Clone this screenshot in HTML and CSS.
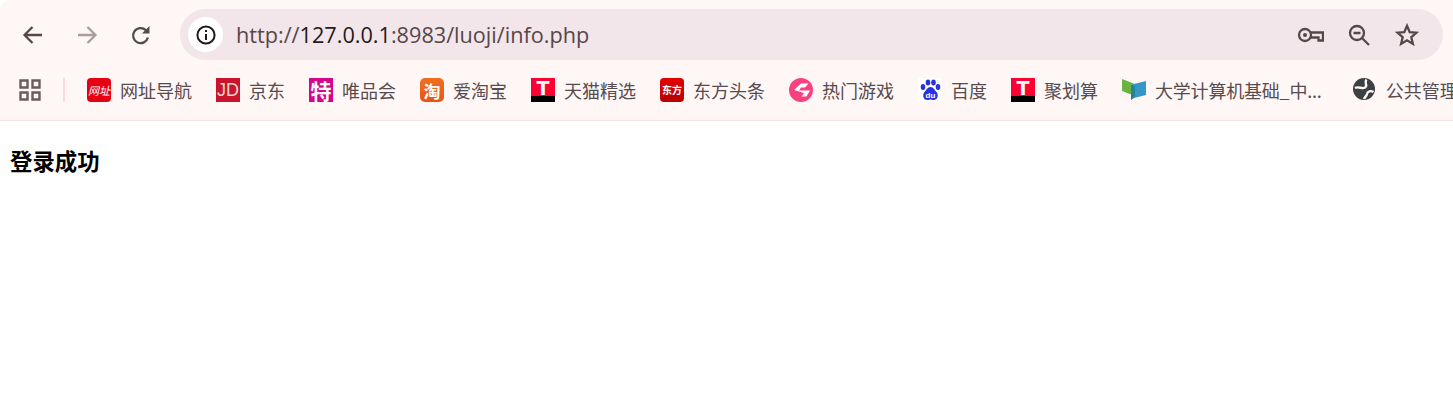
FILE: index.html
```
<!DOCTYPE html>
<html lang="zh-CN">
<head>
<meta charset="utf-8">
<title>登录成功</title>
<link rel="stylesheet" href="styles.css">
</head>
<body>
<header class="chrome">
  <div class="toolbar">
    <div class="nav">
      <button class="nav-btn"><svg width="24" height="24" viewBox="0 0 24 24"><path d="M21 12H4M11.500 4l-8 8 8 8" class="stroke"/></svg></button>
      <button class="nav-btn is-disabled"><svg width="24" height="24" viewBox="0 0 24 24"><path d="M3 12h17M12.500 4l8 8-8 8" class="stroke"/></svg></button>
      <button class="nav-btn"><svg width="24" height="24" viewBox="0 0 24 24"><path d="M18.900 14.500A7.500 7.500 0 1 1 16.800 7.200" class="stroke"/><path d="M20.500 3v7.500H13z" fill="#574749"/></svg></button>
    </div>
    <div class="omnibox">
      <span class="site-info"><svg width="22" height="22" viewBox="0 0 22 22"><circle cx="11" cy="11" r="8.600" fill="none" stroke="#1f1a1b" stroke-width="2"/><path d="M11 10v6M11 6v2" stroke="#1f1a1b" stroke-width="2" fill="none"/></svg></span>
      <span class="url">http://<b class="host">127.0.0.1</b>:8983/luoji/info.php</span>
      <span class="actions">
        <svg class="key" width="29" height="24" viewBox="0 0 29 24"><circle cx="10" cy="12" r="6" class="stroke"/><circle cx="10" cy="12" r="2" fill="#574749"/><path d="M16 9.500H28V17.500H23.500V14.500H16" class="stroke"/></svg>
        <svg width="24" height="24" viewBox="0 0 24 24"><circle cx="10" cy="10" r="7" class="stroke"/><path d="M15 15l7 7M6.500 10h7" class="stroke"/></svg>
        <svg width="24" height="24" viewBox="0 0 24 24"><path d="M12 2.800l2.700 6.300 6.800.6-5.200 4.500 1.600 6.700-5.900-3.600-5.900 3.600 1.600-6.700-5.200-4.500 6.800-.6z" class="stroke"/></svg>
      </span>
    </div>
  </div>
  <nav class="bookmarks">
    <svg class="apps" width="22" height="22" viewBox="0 0 22 22"><path d="M1.500 1.500h7v7h-7zM13.500 1.500h7v7h-7zM1.500 13.500h7v7h-7zM13.500 13.500h7v7h-7z" fill="none" stroke="#6b5c5e" stroke-width="2.400"/></svg>
    <span class="sep"></span>
    <a class="bm"><span class="fav fav-wz">网址</span>网址导航</a>
    <a class="bm"><span class="fav fav-jd">JD</span>京东</a>
    <a class="bm"><span class="fav fav-te">特</span>唯品会</a>
    <a class="bm"><span class="fav fav-tao">淘</span>爱淘宝</a>
    <a class="bm"><span class="fav fav-t">T</span>天猫精选</a>
    <a class="bm"><span class="fav fav-df">东方</span>东方头条</a>
    <a class="bm"><svg class="fav" viewBox="0 0 24 24"><circle cx="12" cy="12" r="12" fill="#f8417f"/><path d="M5 12l7-6.500h7.500l-3.500 4h-4l-2 3h11l-3.500 6h-5l2.500-3.500z" fill="#fff"/></svg>热门游戏</a>
    <a class="bm"><svg class="fav" viewBox="0 0 24 24"><rect width="24" height="24" fill="#fff"/><g fill="#2932e1"><ellipse cx="5" cy="9" rx="2.300" ry="3"/><ellipse cx="10" cy="4.500" rx="2.300" ry="3"/><ellipse cx="15.500" cy="4.500" rx="2.300" ry="3"/><ellipse cx="20" cy="9" rx="2.300" ry="3"/><path d="M12.500 9c3 0 4 3 6 5s2 8-3 8c-2 0-2-.8-3-.8s-1 .8-3 .8c-5 0-5-6-3-8s3-5 6-5z"/></g><text x="12.500" y="20" class="du">du</text></svg>百度</a>
    <a class="bm"><span class="fav fav-t">T</span>聚划算</a>
    <a class="bm bm-long"><svg class="fav" viewBox="0 0 24 24"><path d="M0 1l13 5v12L0 13z" fill="#69b340"/><path d="M12 6l12-3v14l-12 3-3 2V7z" fill="#3497c9"/><path d="M9 7l4 1v10l-4 4z" fill="#2a7f9b"/></svg>大学计算机基础_中...</a>
    <a class="bm"><svg class="fav" viewBox="0 0 24 24"><circle cx="11" cy="11" r="11" fill="#3c4043"/><path d="M13.500 1.500C10.500 5 15.500 7 12 9.500 9 11.500 6 8 2 10M20.500 14C18 12.500 14.500 13 14 16 13.500 18.500 11.500 19 11 21" fill="none" stroke="#fff6f6" stroke-width="2.400"/></svg>公共管理</a>
  </nav>
</header>
<main class="page">
  <h3 class="msg">登录成功</h3>
</main>
</body>
</html>
```
FILE: styles.css
```
* { box-sizing: border-box; }
html, body { margin: 0; padding: 0; height: 100%; overflow: hidden; background: #fff; }
body { font-family: "Noto Sans CJK SC", "Noto Sans", sans-serif; }

.chrome {
  background: #fff6f6;
  border-bottom: 1px solid #fbdfe2;
  border-top-left-radius: 10px;
  height: 121px;
}
.toolbar {
  display: flex;
  align-items: center;
  height: 70px;
  padding: 9px 10px 10px 6px;
}
.nav { display: flex; gap: 22px; width: 174px; padding-left: 11px; }
.nav-btn {
  width: 32px; height: 32px; padding: 4px;
  border: 0; background: none;
  display: flex; align-items: center; justify-content: center;
}
.stroke { fill: none; stroke: #574749; stroke-width: 2.300; }
.is-disabled svg { opacity: .5; }

.omnibox {
  flex: 1;
  height: 51px;
  background: #f2e6ea;
  border-radius: 26px;
  display: flex;
  align-items: center;
  padding: 0 24px 0 8px;
}
.site-info {
  width: 35px; height: 35px;
  border-radius: 50%;
  background: #fff;
  display: flex; align-items: center; justify-content: center;
}
.url {
  margin-left: 13px;
  font-family: "Open Sans", sans-serif;
  font-size: 21.670px;
  color: #574749;
  white-space: nowrap;
}
.host { font-weight: 400; color: #1f1a1b; }
.actions { margin-left: auto; display: flex; align-items: center; gap: 24px; }
.key { margin-right: -1px; }

.bookmarks {
  display: flex;
  align-items: center;
  height: 50px;
  padding: 0 0 10px 19px;
  white-space: nowrap;
  overflow: hidden;
}
.apps { flex: none; margin-right: 22px; }
.sep { flex: none; width: 2px; height: 24px; background: #fbd9df; margin-right: 22px; }
.bm {
  flex: none;
  display: flex;
  align-items: center;
  gap: 9px;
  margin-right: 24px;
  font-size: 18px;
  line-height: 24px;
  color: #574b4d;
}
.bm-long { margin-right: 31px; letter-spacing: -.2px; }
.fav {
  flex: none;
  width: 24px; height: 24px;
  display: flex; align-items: center; justify-content: center;
  color: #fff;
  font-weight: 700;
  line-height: 1;
}
.fav-wz { background: #e60012; border-radius: 4px; font-size: 11px; font-style: italic; font-weight: 400; }
.fav-jd { background: #c9152b; font-family: "Liberation Sans", sans-serif; font-size: 18px; font-weight: 400; color: #f3d0d4; }
.fav-te { background: #d6068b; font-size: 21px; }
.fav-tao { background: linear-gradient(#f0701e, #e8531a); border-radius: 5px; font-size: 17px; }
.fav-t {
  background: linear-gradient(#ff0033 0 73%, #000 73%);
  font-family: "DejaVu Sans", sans-serif;
  font-size: 19px;
  align-items: flex-start;
  padding-top: 1px;
}
.fav-df { background: linear-gradient(#e60000, #b50000); border-radius: 4px; font-size: 10px; }
.du { font: 700 8px "Liberation Sans", sans-serif; fill: #fff; text-anchor: middle; }

.page { padding: 24px 10px; }
.msg {
  margin: 0;
  font-size: 22.400px;
  line-height: 30px;
  font-weight: 700;
  color: #000;
}
```
